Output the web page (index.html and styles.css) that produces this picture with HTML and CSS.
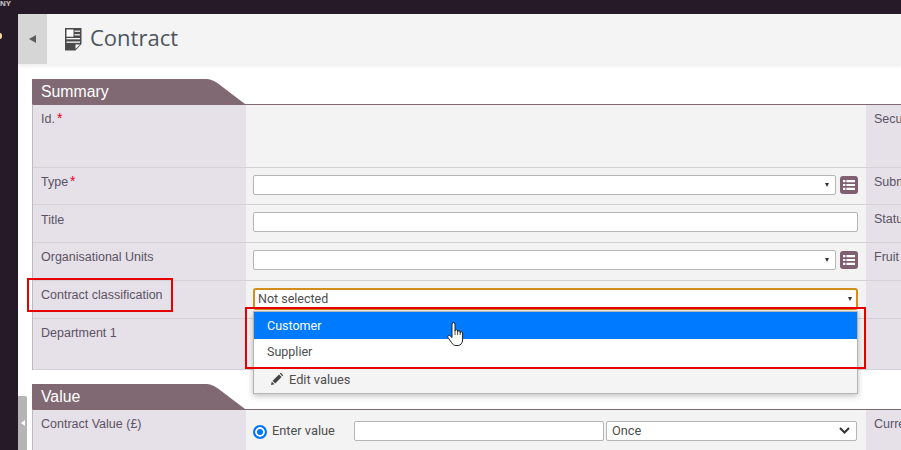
FILE: index.html
```html
<!DOCTYPE html>
<html lang="en">
<head>
<meta charset="utf-8">
<title>Contract</title>
<link rel="stylesheet" href="styles.css">
</head>
<body>
<div class="topbar"><span class="brand">NY</span></div>
<div class="shell">
  <aside class="rail"><span class="rail-dot"></span></aside>
  <main class="content">
    <header class="pagehead">
      <button class="toggle"><span class="tri-left"></span></button>
      <svg class="docicon" width="17" height="23" viewBox="0 0 17 23">
        <path fill="#4a4a4a" d="M0 0h16.500v16l-6 6.500H0z"/>
        <rect x="1.500" y="1.500" width="7" height="7.200" fill="#fff"/>
        <rect x="9.500" y="2.500" width="5.500" height="1.500" fill="#d8d8d8"/>
        <rect x="9.500" y="6" width="5.500" height="1.500" fill="#d8d8d8"/>
        <rect x="1.500" y="10" width="13.500" height="1.300" fill="#fff"/>
        <rect x="1.500" y="13.500" width="13.500" height="1.300" fill="#fff"/>
        <path fill="#fff" d="M10.500 16.500h4.500l-4.500 4.500z"/>
      </svg>
      <h1 class="title">Contract</h1>
    </header>

    <section class="panel">
      <h2 class="tab">Summary</h2>
      <div class="form">
        <div class="row tall">
          <div class="label">Id.<span class="req">*</span></div>
          <div class="value"></div>
          <div class="label side">Security</div>
        </div>
        <div class="row h37">
          <div class="label">Type<span class="req">*</span></div>
          <div class="value"><div class="combo"><span class="caret"></span></div><span class="listbtn"><svg width="12" height="10" viewBox="0 0 12 10"><path fill="#fff" d="M0 0h2.400v2.200H0zM3.400 0H12v2.200H3.400zM0 3.900h2.400v2.200H0zM3.400 3.900H12v2.200H3.400zM0 7.800h2.400V10H0zM3.400 7.800H12V10H3.400z"/></svg></span></div>
          <div class="label side">Submitted</div>
        </div>
        <div class="row h38">
          <div class="label lower">Title</div>
          <div class="value"><div class="textbox"></div></div>
          <div class="label side">Status</div>
        </div>
        <div class="row h38">
          <div class="label">Organisational Units</div>
          <div class="value"><div class="combo"><span class="caret"></span></div><span class="listbtn"><svg width="12" height="10" viewBox="0 0 12 10"><path fill="#fff" d="M0 0h2.400v2.200H0zM3.400 0H12v2.200H3.400zM0 3.900h2.400v2.200H0zM3.400 3.900H12v2.200H3.400zM0 7.800h2.400V10H0zM3.400 7.800H12V10H3.400z"/></svg></span></div>
          <div class="label side">Fruit</div>
        </div>
        <div class="row h38">
          <div class="label">Contract classification</div>
          <div class="value"><div class="combo open"><span class="combo-text">Not selected</span><span class="caret"></span></div></div>
          <div class="label side"></div>
        </div>
        <div class="row h51">
          <div class="label">Department 1</div>
          <div class="value"></div>
          <div class="label side"></div>
        </div>
      </div>
    </section>

    <section class="panel">
      <h2 class="tab">Value</h2>
      <div class="form">
        <div class="row h40">
          <div class="label">Contract Value (£)</div>
          <div class="value mid">
            <span class="radio"></span>
            <span class="radio-text">Enter value</span>
            <div class="textbox amount"></div>
            <div class="nativeselect"><span>Once</span><svg width="11" height="7" viewBox="0 0 11 7"><path fill="none" stroke="#333" stroke-width="2" d="M1 1l4.500 4.500L10 1"/></svg></div>
          </div>
          <div class="label side">Currency</div>
        </div>
      </div>
    </section>
  </main>
</div>

<div class="menu">
  <div class="opt active">Customer</div>
  <div class="opt">Supplier</div>
  <div class="edit"><svg width="12" height="12" viewBox="0 0 12 12"><path fill="#444" d="M0 12l.8-3.400 2.600 2.600zM1.600 7.800L8 1.400l2.600 2.600-6.400 6.400zM8.800.6l.5-.5a.6.6 0 0 1 .8 0l1.800 1.800a.6.6 0 0 1 0 .8l-.5.5z"/></svg><span>Edit values</span></div>
</div>
<span class="mark mark-label"></span>
<span class="mark mark-menu"></span>
<svg class="cursor" width="17" height="25" viewBox="0 0 17 25"><path fill="#fff" stroke="#222" stroke-width="1" stroke-linejoin="round" d="M5 2a1.500 1.500 0 0 1 3 0v7a1.300 1.300 0 0 1 2.600 0v1a1.300 1.300 0 0 1 2.600 0v1a1.200 1.200 0 0 1 2.400 0v7c0 3-2 5.500-4.500 5.500H9c-2 0-3.500-1-4.500-3L1 15.500c-.9-1.500 1-3 2.300-1.500L5 15.500z"/><path fill="none" stroke="#222" stroke-width=".8" d="M8 9v4M10.600 9.500V13M13.200 10.500V13"/></svg>
<div class="edge-tab"><span class="tri-white"></span></div>
</body>
</html>
```
FILE: styles.css
```css
* { box-sizing: border-box; }
html, body { margin: 0; height: 100%; overflow: hidden; }
body {
  width: 901px;
  height: 450px;
  background: #271a28;
  font-family: "Liberation Sans", Arial, sans-serif;
  font-size: 12.500px;
  color: #5c5264;
  display: flex;
  flex-direction: column;
}
.topbar { height: 14px; flex: none; }
.brand {
  display: block;
  font-size: 8px;
  line-height: 8px;
  font-weight: bold;
  color: #c9c4c9;
}
.shell { flex: 1; display: flex; min-height: 0; }
.rail { width: 18px; flex: none; position: relative; }
.rail-dot {
  position: absolute;
  left: -2px;
  top: 19px;
  width: 4px;
  height: 6px;
  border-radius: 50%;
  background: #f7dca6;
}
.content { flex: 1; min-width: 0; background: #fff; overflow: hidden; }
.pagehead {
  height: 50px;
  background: #f4f4f4;
  display: flex;
  align-items: center;
  box-shadow: 0 2px 4px rgba(0,0,0,.08);
}
.toggle {
  width: 29px;
  height: 50px;
  border: 0;
  padding: 0;
  background: #d6d6d6;
  display: flex;
  align-items: center;
  justify-content: center;
}
.tri-left {
  width: 0;
  height: 0;
  border-style: solid;
  border-width: 4px 7px 4px 0;
  border-color: transparent #5e5e5e transparent transparent;
}
.docicon { margin-left: 18px; flex: none; }
.title {
  margin: 0 0 5px 8px;
  font-family: "Open Sans", sans-serif;
  font-size: 22px;
  font-weight: 400;
  color: #4d5560;
}
.panel { padding-left: 14px; margin-top: 15px; }
.panel + .panel { margin-top: 14px; }
.tab {
  width: 214px;
  height: 25px;
  margin: 0;
  padding: 0 0 0 9px;
  background: #816974;
  color: #fff;
  font-size: 15.800px;
  font-weight: 400;
  line-height: 25px;
  clip-path: polygon(0 0, 175px 0, 178px 0.5px, 182px 2px, 186px 4.5px, 213px 25px, 0 25px);
}
.form {
  width: 869px;
  border-top: 1px solid #816974;
  border-left: 1px solid #bbb;
  overflow: hidden;
}
.row {
  display: grid;
  grid-template-columns: 213px 620px 36px;
  border-bottom: 1px solid #d3d1d3;
}
.tall { height: 63px; }
.h37 { height: 37px; }
.h38 { height: 38px; }
.h51 { height: 51px; }
.h40 { height: 41px; border-bottom: 0; }
.label { background: #e6e1e8; padding: 7px 0 0 8px; white-space: nowrap; overflow: hidden; line-height: 14px; }
.label.lower { padding-top: 8px; }
.req { color: #e4002b; margin-left: 2px; font-size: 14px; line-height: 0; }
.value { background: #f3f3f3; padding: 7px 8px 0 7px; display: flex; align-items: flex-start; }
.combo {
  width: 583px;
  height: 20px;
  background: #fff;
  border: 1px solid #b5b5b5;
  border-radius: 2px;
  position: relative;
  display: flex;
  align-items: center;
  padding-left: 4px;
}
.combo.open {
  width: 605px;
  height: 22px;
  border: 2px solid #d18f1a;
  border-radius: 3px;
  padding: 0 0 1px 3px;
}
.combo-text { font-family: Roboto, sans-serif; font-size: 12.500px; color: #4e4e4e; }
.caret {
  position: absolute;
  right: 6px;
  top: 7px;
  width: 0;
  height: 0;
  border-style: solid;
  border-width: 4px 2.500px 0;
  border-color: #333 transparent transparent;
}
.open .caret { right: 4px; top: 7px; }
.listbtn {
  width: 18px;
  height: 18px;
  margin: 1px 0 0 4px;
  background: #815f73;
  border-radius: 3px;
  display: flex;
  align-items: center;
  justify-content: center;
}
.textbox {
  width: 605px;
  height: 20px;
  background: #fff;
  border: 1px solid #b5b5b5;
  border-radius: 2px;
}
.mid { padding-top: 11px; padding-left: 7px; }
.radio {
  width: 14px;
  height: 14px;
  margin-top: 4px;
  border-radius: 50%;
  border: 2px solid #0075ff;
  background: #0075ff;
  box-shadow: inset 0 0 0 2px #fff;
  flex: none;
}
.radio-text {
  width: 82px;
  margin-left: 5px;
  padding-top: 2px;
  font-family: Roboto, sans-serif;
  font-size: 12.800px;
  color: #4e4e4e;
  flex: none;
}
.textbox.amount { width: 250px; flex: none; }
.nativeselect {
  width: 251px;
  height: 20px;
  margin-left: 2px;
  background: #fff;
  border: 1px solid #b5b5b5;
  border-radius: 2px;
  padding: 0 6px 1px 5px;
  display: flex;
  align-items: center;
  justify-content: space-between;
  font-family: Roboto, sans-serif;
  font-size: 12.800px;
  color: #4e4e4e;
}
.menu {
  position: absolute;
  left: 253px;
  top: 311px;
  width: 605px;
  height: 83px;
  background: #fff;
  border: 1px solid #b5b5b5;
  box-shadow: 0 2px 6px rgba(0,0,0,.25);
  font-family: Roboto, sans-serif;
  color: #4e4e4e;
}
.opt { height: 27px; line-height: 26px; padding-left: 13px; }
.opt.active { background: #007bff; color: #fff; line-height: 27px; }
.edit {
  height: 26px;
  margin-top: 1px;
  background: #f4f4f4;
  display: flex;
  align-items: center;
  padding: 0 0 2px 17px;
  gap: 6px;
  font-size: 12.800px;
}
.mark { position: absolute; border: 2px solid #e60000; pointer-events: none; }
.mark-label { left: 27px; top: 278px; width: 146px; height: 34px; }
.mark-menu { left: 245px; top: 307px; width: 621px; height: 62px; }
.cursor { position: absolute; left: 447px; top: 322px; }
.edge-tab {
  position: absolute;
  left: 18px;
  top: 396px;
  width: 9px;
  height: 54px;
  background: #b5b5b5;
  border-radius: 0 2px 0 0;
  display: flex;
  align-items: center;
  justify-content: center;
}
.tri-white {
  width: 0;
  height: 0;
  border-style: solid;
  border-width: 3px 4px 3px 0;
  border-color: transparent #fff transparent transparent;
}
```
